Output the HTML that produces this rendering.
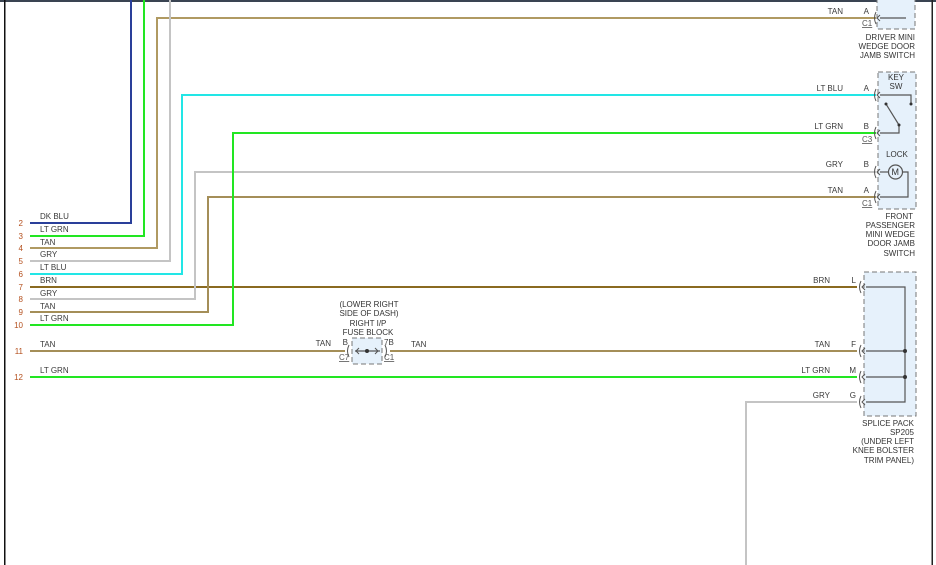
<!DOCTYPE html>
<html><head><meta charset="utf-8"><style>
html,body{margin:0;padding:0;background:#fff;}
svg{display:block;font-family:"Liberation Sans",Arial,sans-serif;}
.l{font-size:8px;fill:#3a3a3a;}
.n{font-size:8px;fill:#b4501e;}
.c{font-size:8px;fill:#555;}
.t{font-size:8px;fill:#333;}
</style></head><body>
<svg width="936" height="565" viewBox="0 0 936 565" xmlns="http://www.w3.org/2000/svg">
<rect x="0" y="0" width="936" height="2" fill="#3a4452"/>
<rect x="4" y="0" width="1.5" height="565" fill="#111"/>
<rect x="931.5" y="0" width="1.5" height="565" fill="#222"/>

<g fill="#e6f1fb" stroke="#777" stroke-width="1" stroke-dasharray="5,3">
<rect x="877" y="-5" width="38" height="34"/>
<rect x="878" y="72" width="38" height="137"/>
<rect x="864" y="272" width="52" height="144"/>
<rect x="352" y="338" width="30" height="26"/>
</g>

<g fill="none" stroke-width="2">
<polyline points="30,223 131,223 131,0" stroke="#2a3f9a"/>
<polyline points="30,236 144,236 144,0" stroke="#22e622"/>
<polyline points="30,248 157,248 157,18 876,18" stroke="#b09a62"/>
<polyline points="30,261 170,261 170,0" stroke="#c4c4c4"/>
<polyline points="30,274 182,274 182,95 876,95" stroke="#22e6e6"/>
<polyline points="30,287 857,287" stroke="#8a6a20"/>
<polyline points="30,299 195,299 195,172 876,172" stroke="#c4c4c4"/>
<polyline points="30,312 208,312 208,197 876,197" stroke="#a48e58"/>
<polyline points="30,325 233,325 233,133 876,133" stroke="#22e622"/>
<polyline points="30,351 345,351" stroke="#a48e58"/>
<polyline points="390,351 857,351" stroke="#a48e58"/>
<polyline points="30,377 857,377" stroke="#22e622"/>
<polyline points="746,565 746,402 857,402" stroke="#c4c4c4"/>
</g>

<g fill="none" stroke="#555" stroke-width="1.2">
<polyline points="880,18 906,18"/>
<polyline points="880,95 911,95 911,104"/>
<polyline points="880,133 899,133 899,125"/>
<line x1="886" y1="104" x2="899" y2="125"/>
<polyline points="880,172 888,172"/>
<polyline points="903,172 908,172 908,197 880,197"/>
<circle cx="895.5" cy="172" r="7" fill="#e6f1fb"/>
<polyline points="866,287 905,287 905,402 866,402"/>
<line x1="866" y1="351" x2="905" y2="351"/>
<line x1="866" y1="377" x2="905" y2="377"/>
<line x1="355" y1="351" x2="380" y2="351"/>
</g>
<g fill="#333"><circle cx="905" cy="351" r="2"/><circle cx="905" cy="377" r="2"/><circle cx="367" cy="351" r="2"/><circle cx="886" cy="104" r="1.5"/><circle cx="911" cy="104" r="1.5"/><circle cx="899" cy="125" r="1.5"/></g>
<text x="891.5" y="175" style="font-size:9px" fill="#333">M</text>

<g fill="none" stroke="#555" stroke-width="1">
<path d="M876,12 q-3,6 0,12 M880,15 l-3,3 3,3"/>
<path d="M876,89 q-3,6 0,12 M880,92 l-3,3 3,3"/>
<path d="M876,127 q-3,6 0,12 M880,130 l-3,3 3,3"/>
<path d="M876,166 q-3,6 0,12 M880,169 l-3,3 3,3"/>
<path d="M876,191 q-3,6 0,12 M880,194 l-3,3 3,3"/>
<path d="M861,281 q-3,6 0,12 M865,284 l-3,3 3,3"/>
<path d="M861,345 q-3,6 0,12 M865,348 l-3,3 3,3"/>
<path d="M861,371 q-3,6 0,12 M865,374 l-3,3 3,3"/>
<path d="M861,396 q-3,6 0,12 M865,399 l-3,3 3,3"/>
<path d="M349,345 q-3,6 0,12 M359,348 l-3,3 3,3"/>
<path d="M385,345 q3,6 0,12 M375,348 l3,3 -3,3"/>
</g>

<g class="n" text-anchor="end">
<text x="23" y="226">2</text><text x="23" y="239">3</text><text x="23" y="251">4</text><text x="23" y="264">5</text><text x="23" y="277">6</text><text x="23" y="290">7</text><text x="23" y="302">8</text><text x="23" y="315">9</text><text x="23" y="328">10</text><text x="23" y="354">11</text><text x="23" y="380">12</text>
</g>
<g class="l">
<text x="40" y="219">DK BLU</text><text x="40" y="232">LT GRN</text><text x="40" y="245">TAN</text><text x="40" y="257">GRY</text><text x="40" y="270">LT BLU</text><text x="40" y="283">BRN</text><text x="40" y="296">GRY</text><text x="40" y="309">TAN</text><text x="40" y="321">LT GRN</text><text x="40" y="347">TAN</text><text x="40" y="373">LT GRN</text>
</g>
<g class="l" text-anchor="end">
<text x="843" y="14">TAN</text><text x="843" y="91">LT BLU</text><text x="843" y="129">LT GRN</text><text x="843" y="167">GRY</text><text x="843" y="193">TAN</text>
<text x="830" y="283">BRN</text><text x="830" y="347">TAN</text><text x="830" y="373">LT GRN</text><text x="830" y="398">GRY</text>
<text x="331" y="346">TAN</text>
<text x="869" y="14">A</text><text x="869" y="91">A</text><text x="869" y="129">B</text><text x="869" y="167">B</text><text x="869" y="193">A</text>
<text x="856" y="283">L</text><text x="856" y="347">F</text><text x="856" y="373">M</text><text x="856" y="398">G</text>
<text x="348" y="345">B</text>
</g>
<text class="l" x="411" y="347">TAN</text>
<text class="l" x="384" y="345">7B</text>
<g class="c" text-decoration="underline">
<text x="862" y="26">C1</text><text x="862" y="142">C3</text><text x="862" y="206">C1</text><text x="339" y="360">C7</text><text x="384" y="360">C1</text>
</g>
<g class="t" text-anchor="end">
<text x="915" y="40">DRIVER MINI</text><text x="915" y="49">WEDGE DOOR</text><text x="915" y="58">JAMB SWITCH</text>
<text x="913" y="219">FRONT</text><text x="915" y="228">PASSENGER</text><text x="915" y="237">MINI WEDGE</text><text x="915" y="246">DOOR JAMB</text><text x="915" y="256">SWITCH</text>
<text x="914" y="426">SPLICE PACK</text><text x="914" y="435">SP205</text><text x="914" y="444">(UNDER LEFT</text><text x="914" y="453">KNEE BOLSTER</text><text x="914" y="463">TRIM PANEL)</text>
</g>
<g class="t" text-anchor="middle">
<text x="896" y="80">KEY</text><text x="896" y="89">SW</text><text x="897" y="157">LOCK</text>
<text x="369" y="307">(LOWER RIGHT</text><text x="369" y="316">SIDE OF DASH)</text><text x="368" y="326">RIGHT I/P</text><text x="368" y="335">FUSE BLOCK</text>
</g>
</svg>
</body></html>
